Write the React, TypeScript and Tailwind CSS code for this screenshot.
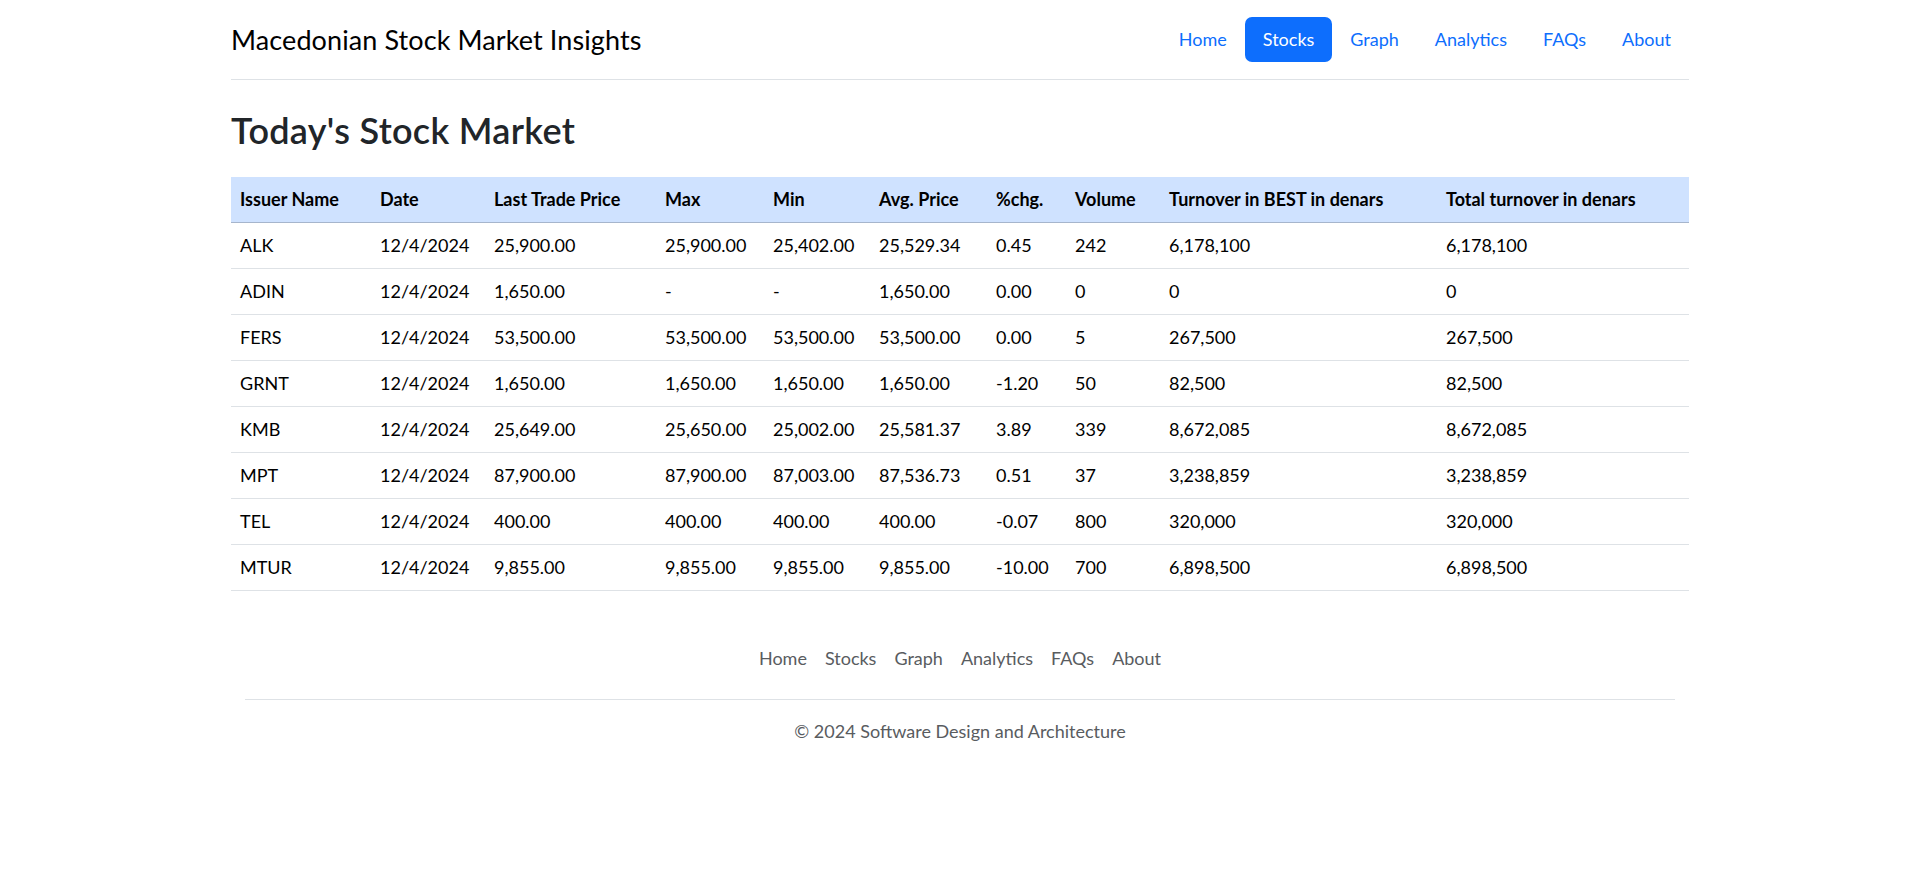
import React from "react";

type Row = string[];

const columns = [
  { label: "Issuer Name", width: "w-[140px]" },
  { label: "Date", width: "w-[114px]" },
  { label: "Last Trade Price", width: "w-[171px]" },
  { label: "Max", width: "w-[108px]" },
  { label: "Min", width: "w-[106px]" },
  { label: "Avg. Price", width: "w-[117px]" },
  { label: "%chg.", width: "w-[79px]" },
  { label: "Volume", width: "w-[94px]" },
  { label: "Turnover in BEST in denars", width: "w-[277px]" },
  { label: "Total turnover in denars", width: "w-[252px]" },
];

const rows: Row[] = [
  ["ALK", "12/4/2024", "25,900.00", "25,900.00", "25,402.00", "25,529.34", "0.45", "242", "6,178,100", "6,178,100"],
  ["ADIN", "12/4/2024", "1,650.00", "-", "-", "1,650.00", "0.00", "0", "0", "0"],
  ["FERS", "12/4/2024", "53,500.00", "53,500.00", "53,500.00", "53,500.00", "0.00", "5", "267,500", "267,500"],
  ["GRNT", "12/4/2024", "1,650.00", "1,650.00", "1,650.00", "1,650.00", "-1.20", "50", "82,500", "82,500"],
  ["KMB", "12/4/2024", "25,649.00", "25,650.00", "25,002.00", "25,581.37", "3.89", "339", "8,672,085", "8,672,085"],
  ["MPT", "12/4/2024", "87,900.00", "87,900.00", "87,003.00", "87,536.73", "0.51", "37", "3,238,859", "3,238,859"],
  ["TEL", "12/4/2024", "400.00", "400.00", "400.00", "400.00", "-0.07", "800", "320,000", "320,000"],
  ["MTUR", "12/4/2024", "9,855.00", "9,855.00", "9,855.00", "9,855.00", "-10.00", "700", "6,898,500", "6,898,500"],
];

const links = ["Home", "Stocks", "Graph", "Analytics", "FAQs", "About"];

function Header() {
  return (
    <header className="flex items-center justify-between py-[17px] border-b border-[#dee2e6]">
      <a className="text-[27px] leading-[30px] text-black tracking-[0.1px]">
        Macedonian Stock Market Insights
      </a>
      <ul className="flex">
        {links.map((l) => (
          <li key={l}>
            <a
              className={
                l === "Stocks"
                  ? "block px-[18px] py-[9px] leading-[27px] rounded-[7px] bg-[#0d6efd] text-white"
                  : "block px-[18px] py-[9px] leading-[27px] rounded-[7px] text-[#0d6efd]"
              }
            >
              {l}
            </a>
          </li>
        ))}
      </ul>
    </header>
  );
}

function StockTable() {
  return (
    <table className="w-full table-fixed border-collapse text-left text-black">
      <colgroup>
        {columns.map((c) => (
          <col key={c.label} className={c.width} />
        ))}
      </colgroup>
      <thead>
        <tr className="bg-[#cfe2ff] border-b border-[#a6b5cc]">
          {columns.map((c) => (
            <th key={c.label} className="px-[9px] py-[9px] leading-[27px] font-bold whitespace-nowrap">
              {c.label}
            </th>
          ))}
        </tr>
      </thead>
      <tbody>
        {rows.map((r) => (
          <tr key={r[0]} className="border-b border-[#dee2e6]">
            {r.map((cell, i) => (
              <td key={i} className="px-[9px] py-[9px] leading-[27px] whitespace-nowrap">
                {cell}
              </td>
            ))}
          </tr>
        ))}
      </tbody>
    </table>
  );
}

function Footer() {
  return (
    <footer className="mt-[45px] mx-[14px] text-[#595c5f]">
      <ul className="flex justify-center pb-[18px] border-b border-[#dee2e6]">
        {links.map((l) => (
          <li key={l}>
            <a className="block px-[9px] py-[9px] leading-[27px]">{l}</a>
          </li>
        ))}
      </ul>
      <p className="mt-[18px] text-center leading-[27px]">
        © 2024 Software Design and Architecture
      </p>
    </footer>
  );
}

export default function App() {
  return (
    <div className="min-h-screen bg-white pl-[3px] font-['Lato',_'Open_Sans',_sans-serif] text-[18px] text-[#212529]">
      <div className="w-[1458px] mx-auto">
        <Header />
        <h2 className="mt-[29px] mb-[25px] text-[36px] leading-[43px] font-semibold tracking-[0.3px]">
          Today's Stock Market
        </h2>
        <StockTable />
        <Footer />
      </div>
    </div>
  );
}
